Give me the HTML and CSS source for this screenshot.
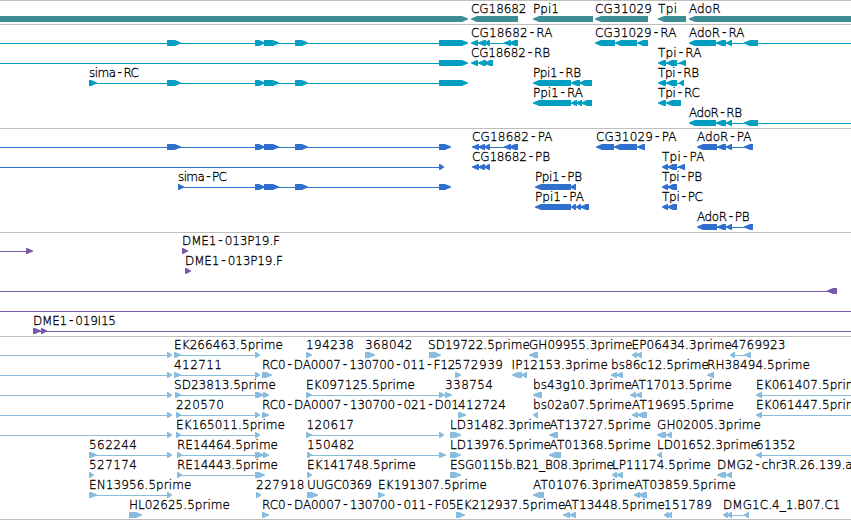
FILE: index.html
```html
<!DOCTYPE html>
<html lang="en">
<head>
<meta charset="utf-8">
<title>Genome tracks</title>
<link rel="stylesheet" href="styles.css">
</head>
<body>
<main class="browser" id="browser"></main>
<script src="tracks.js"></script>
</body>
</html>
```

FILE: styles.css
```css
* {
  box-sizing: border-box;
}

body {
  margin: 0;
  background: #fff;
  overflow: hidden;
}

.browser {
  display: flex;
  flex-direction: column;
  width: 851px;
  height: 520px;
  border-bottom: 1px solid #bebebe;
}

.track {
  display: flex;
  flex-direction: column;
  padding: 2px 0 1px;
  border-top: 1px solid #bebebe;
}

.track--reads {
  padding-bottom: 0;
}

.row {
  display: block;
  width: 851px;
  height: 20px;
  overflow: visible;
}

.track--genes { fill: #3d8d94; }
.track--transcripts { fill: #009fc2; }
.track--proteins { fill: #316fce; }
.track--clones { fill: #7858a8; }
.track--reads { fill: #87bcdf; }

.label {
  font-family: "DejaVu Sans", sans-serif;
  font-size: 12px;
  font-weight: 200;
  fill: #000;
  stroke: #000;
  stroke-width: 0.3px;
}

.dash {
  font-family: "DejaVu Sans Mono", monospace;
  font-size: 14px;
  stroke: none;
}
```

FILE: tracks.js
```js
// Glyph codes: n = intron line, r = exon pointing right, l = exon pointing left.
// Label entries: [text, start, end].
const tracks = [
  { name: "genes", rows: [
    ["r0-468 l471-518 l533-593 l595-648 l658-686 l689-852",
      [["CG18682", 471, 526], ["Ppi1", 533, 558.5], ["CG31029", 595, 651.5], ["Tpi", 658, 676.5], ["AdoR", 689, 720]]]
  ]},
  { name: "transcripts", rows: [
    ["n0-440 r167-181 r255-265 r264-279 r295-308 r439-468 n472-516 l471-478 l478-486 l484-490 l504-511 l509-518 l595-615 l615-637 l637-648 n690-851 l689-716 l716-726 l726-732 l744-758",
      [["CG18682-RA", 471, 552], ["CG31029-RA", 595, 676], ["AdoR-RA", 689, 744]]],
    ["n0-440 r439-468 l471-478 l478-486 l484-493 n660-684 l658-666 l666-677 l679-686",
      [["CG18682-RB", 471, 549.5], ["Tpi-RA", 658, 701]]],
    ["n90-440 r89-97 r167-181 r255-265 r264-279 r295-308 r439-468 l533-571 l571-580 l579-592 n660-682 l658-666 l666-677 l679-684",
      [["sima-RC", 89, 138.5], ["Ppi1-RB", 533, 580.5], ["Tpi-RB", 658, 698.5]]],
    ["l533-571 l571-577 l576-582 l581-592 l658-666 l666-681",
      [["Ppi1-RA", 533, 582.5], ["Tpi-RC", 658, 699.5]]],
    ["n690-851 l689-716 l716-726 l726-732 l744-758", [["AdoR-RB", 689, 741.5]]]
  ]},
  { name: "proteins", rows: [
    ["n0-440 r167-181 r255-265 r264-279 r295-308 r439-451 n474-516 l472-479 l478-485 l484-490 l504-511 l509-518 l596-614 l614-637 l637-645 n698-751 l697-717 l717-726 l726-732 l744-753",
      [["CG18682-PA", 472, 552], ["CG31029-PA", 596, 676], ["AdoR-PA", 697, 751]]],
    ["n0-440 r439-444 l472-479 l478-485 l484-490 n664-684 l662-668 l667-677 l678-685",
      [["CG18682-PB", 472, 549.5], ["Tpi-PA", 662, 704]]],
    ["n180-440 r178-184 r255-265 r264-279 r295-308 r439-451 l535-571 l570-576 l662-668 l667-677",
      [["sima-PC", 178, 226.5], ["Ppi1-PB", 535, 581.5], ["Tpi-PB", 662, 701.5]]],
    ["l535-571 l571-576 l576-581 l580-589 l662-668 l667-677",
      [["Ppi1-PA", 535, 583.5], ["Tpi-PC", 662, 702.5]]],
    ["n698-751 l697-717 l717-726 l726-732 l744-753", [["AdoR-PB", 697, 749]]]
  ]},
  { name: "clones", rows: [
    ["n0-27 r26-33 r182-188", [["DME1-013P19.F", 182, 279.5]]],
    ["r185-191", [["DME1-013P19.F", 185, 282.5]]],
    ["n0-830 l827-837", []],
    ["n0-851", []],
    ["n34-851 r33-41 r41-47", [["DME1-019I15", 33, 115.5]]]
  ]},
  { name: "reads", rows: [
    ["n0-168 r167-172 n176-256 r174-181 r255-260 r306-312 r365-375 r429-441 l529-538 l632-637 l636-642 n733-749 l730-735 l744-751",
      [["EK266463.5prime", 174, 282.5], ["194238", 306, 353.5], ["368042", 365, 412], ["SD19722.5prime", 428, 529.5], ["GH09955.3prime", 529, 632], ["EP06434.3prime", 631.5, 731.5], ["4769923", 731, 785]]],
    ["n0-168 r167-172 n176-256 r174-181 r255-260 r262-272 r455-461 l512-522 l521-527 l611-617 l616-623 l707-714",
      [["412711", 174, 221.5], ["RC0-DA0007-130700-011-F12", 262, 455], ["572939", 454.5, 502.5], ["IP12153.3prime", 511.5, 607.5], ["bs86c12.5prime", 611, 708.5], ["RH38494.5prime", 707, 809.5]]],
    ["n0-168 r167-172 n176-256 r175-181 r255-264 r263-269 n308-440 r306-312 r439-445 r445-452 l533-542 l630-636 l635-642 n758-851 l756-762",
      [["SD23813.5prime", 174, 275.5], ["EK097125.5prime", 306, 414.5], ["338754", 445, 492.5], ["bs43g10.3prime", 533, 631.5], ["AT17013.5prime", 631, 731.5], ["EK061407.5prime", 756, 864.5]]],
    ["n0-168 r167-172 n178-256 r176-181 r255-260 r262-269 r458-466 l533-538 l632-638 l637-647 n758-851 l756-762",
      [["220570", 176, 223.5], ["RC0-DA0007-130700-021-D01", 262, 458.5], ["412724", 458, 505.5], ["bs02a07.5prime", 533, 631.5], ["AT19695.5prime", 632, 733.5], ["EK061447.5prime", 756, 864.5]]],
    ["n0-168 r167-172 n178-256 r176-181 r255-260 n308-440 r306-312 r439-444 r450-461 l549-558 l657-666 l666-672",
      [["EK165011.5prime", 176, 284.5], ["120617", 306.5, 353.5], ["LD31482.3prime", 450, 550.5], ["AT13727.5prime", 549.5, 650.5], ["GH02005.3prime", 657, 760.5]]],
    ["n90-168 r89-97 r167-172 n178-265 r177-182 r255-264 r263-269 n308-440 r307-312 r439-446 r450-461 l549-561 l657-662 n758-851 l756-762",
      [["562244", 89, 136.5], ["RE14464.5prime", 177, 277.5], ["150482", 307, 354], ["LD13976.5prime", 450, 550.5], ["AT01368.5prime", 549.5, 650.5], ["LD01652.3prime", 657, 757.5], ["61352", 756, 795]]],
    ["r89-94 n178-256 r177-182 r255-265 r307-312 r450-461 l612-617 l616-623 l717-726 l726-732",
      [["527174", 89, 136.5], ["RE14443.5prime", 177, 277.5], ["EK141748.5prime", 307, 415.5], ["ESG0115b.B21_B08.3prime", 450, 613.5], ["LP11174.5prime", 612, 710.5], ["DMG2-chr3R.26.139.a", 717, 852]]],
    ["n90-168 r89-97 r167-172 r256-261 r307-318 r378-385 l533-544 l634-640 l638-647",
      [["EN13956.5prime", 89, 191], ["227918", 256, 304], ["UUGC0369", 307, 371.5], ["EK191307.5prime", 378, 486.5], ["AT01076.3prime", 533, 634.5], ["AT03859.5prime", 634.5, 735.5]]],
    ["r129-142 r262-269 r456-465 l563-570 l569-576 l664-669 l668-672 n725-748 l723-728 l727-732 l744-749",
      [["HL02625.5prime", 129, 229.5], ["RC0-DA0007-130700-011-F05", 262, 456], ["EK212937.5prime", 456, 565], ["AT13448.5prime", 564, 664.5], ["151789", 664, 711.5], ["DMG1C.4_1.B07.C1", 723, 840]]]
  ]}
];

function glyph(code) {
  const [a, b] = code.slice(1).split("-").map(Number);
  if (code[0] === "n") return `<rect x="${a}" y="16" width="${b - a}" height="1"/>`;
  const head = Math.min(b - a, 7);
  if (code[0] === "r") {
    const s = b - head;
    return `<path d="M${a} 13H${s + 1}L${b} 15.6V16.4L${s + 1} 19H${a}Z"/>`;
  }
  const s = a + head;
  return `<path d="M${b} 13H${s - 1}L${a} 15.6V16.4L${s - 1} 19H${b}Z"/>`;
}

function label([text, start, end]) {
  const body = text.replace(/-/g, '<tspan class="dash">-</tspan>');
  return `<text class="label" x="${start}" y="10" textLength="${end - start + 0.5}">${body}</text>`;
}

document.getElementById("browser").innerHTML = tracks.map(track =>
  `<section class="track track--${track.name}">` +
  track.rows.map(([codes, labels]) =>
    `<svg class="row">${codes.split(" ").map(glyph).join("")}${labels.map(label).join("")}</svg>`
  ).join("") + "</section>"
).join("");
```
